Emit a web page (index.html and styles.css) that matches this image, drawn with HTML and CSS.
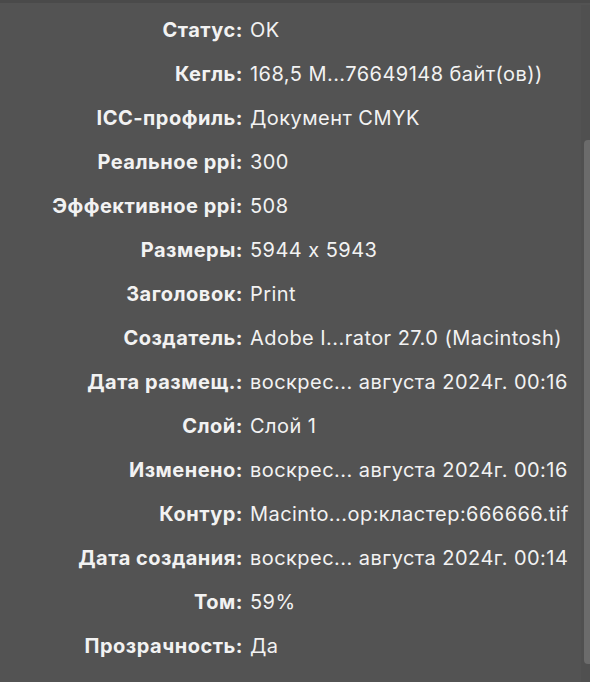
FILE: index.html
```html
<!DOCTYPE html>
<html lang="ru">
<head>
    <meta charset="UTF-8">
    <meta name="viewport" content="width=device-width, initial-scale=1.0">
    <title>Информация о ссылке</title>
    <link rel="stylesheet" href="styles.css">
</head>
<body>
<div class="panel">
    <dl class="info">
        <div class="row"><dt>Статус:</dt><dd>OK</dd></div>
        <div class="row"><dt>Кегль:</dt><dd>168,5 M...76649148 байт(ов))</dd></div>
        <div class="row"><dt>ICC-профиль:</dt><dd>Документ CMYK</dd></div>
        <div class="row"><dt>Реальное ppi:</dt><dd>300</dd></div>
        <div class="row"><dt>Эффективное ppi:</dt><dd>508</dd></div>
        <div class="row"><dt>Размеры:</dt><dd>5944 x 5943</dd></div>
        <div class="row"><dt>Заголовок:</dt><dd>Print</dd></div>
        <div class="row"><dt>Создатель:</dt><dd>Adobe I...rator 27.0 (Macintosh)</dd></div>
        <div class="row"><dt>Дата размещ.:</dt><dd>воскрес... августа 2024г. 00:16</dd></div>
        <div class="row"><dt>Слой:</dt><dd>Слой 1</dd></div>
        <div class="row"><dt>Изменено:</dt><dd>воскрес... августа 2024г. 00:16</dd></div>
        <div class="row"><dt>Контур:</dt><dd>Macinto...op:кластер:666666.tif</dd></div>
        <div class="row"><dt>Дата создания:</dt><dd>воскрес... августа 2024г. 00:14</dd></div>
        <div class="row"><dt>Том:</dt><dd>59%</dd></div>
        <div class="row"><dt>Прозрачность:</dt><dd>Да</dd></div>
    </dl>
    <div class="scroll-track"><div class="scroll-thumb"></div></div>
</div>
</body>
</html>
```

FILE: styles.css
```css
/* Global styles */
html, body {
    margin: 0;
    padding: 0;
    height: 100%;
}

body {
    background-color: #535353;
    font-family: "Inter", "Noto Sans", sans-serif;
    font-feature-settings: "calt" 0;
    color: #f2f2f2;
}

/* Panel */
.panel {
    position: relative;
    height: 682px;
    box-sizing: border-box;
    border-top: 3px solid #4a4a4a;
    overflow: hidden;
}

.info {
    margin: 0;
    padding-top: 5px;
}

.row {
    display: grid;
    grid-template-columns: 243px 1fr;
    column-gap: 7px;
    height: 44px;
    align-items: center;
    font-size: 20px;
    letter-spacing: 0.45px;
}

.row dt {
    text-align: right;
    font-weight: 700;
    letter-spacing: 0.5px;
}

.row dd {
    margin: 0;
    white-space: nowrap;
}

/* Scrollbar */
.scroll-track {
    position: absolute;
    top: 2px;
    right: 0;
    width: 9px;
    bottom: 0;
    background-color: #505050;
}

.scroll-thumb {
    position: absolute;
    top: 135px;
    right: 0;
    width: 6px;
    height: 524px;
    background-color: #6b6b6b;
    border-radius: 4px 0 0 4px;
}
```
